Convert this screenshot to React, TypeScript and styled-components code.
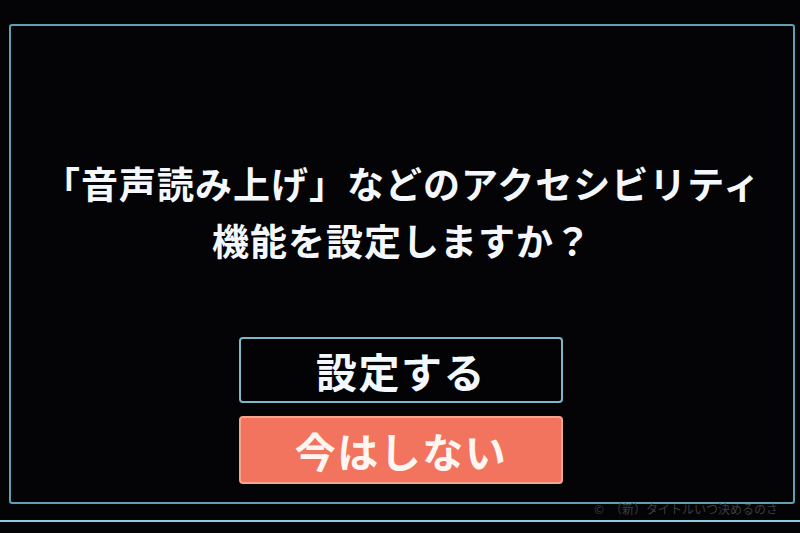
import React from "react";
import styled, { createGlobalStyle } from "styled-components";

const Global = createGlobalStyle`
  html, body { margin: 0; padding: 0; background: #040406; }
  body { width: 800px; height: 533px; overflow: hidden; font-family: "Noto Sans CJK JP", "Noto Sans", sans-serif; }
`;

const Screen = styled.div`
  width: 800px;
  height: 533px;
  display: flex;
  flex-direction: column;
  background: #040406;
`;

const Frame = styled.div`
  margin: 24px 0 0 9px;
  width: 786px;
  height: 480px;
  box-sizing: border-box;
  border: 2px solid #5f9fb2;
  border-radius: 3px;
  display: flex;
  flex-direction: column;
  align-items: center;
  padding-top: 129px;
`;

const Message = styled.div`
  color: #f4f8fc;
  font-size: 37px;
  font-weight: 700;
  line-height: 57px;
  text-align: center;
  letter-spacing: 1px;
  margin-left: 0px;
`;

const Buttons = styled.div`
  margin-top: 68px;
  display: flex;
  flex-direction: column;
  gap: 13px;
  margin-left: -2px;
`;

const Button = styled.div<{ $active?: boolean }>`
  width: 324px;
  height: ${(p) => (p.$active ? 68 : 66)}px;
  box-sizing: border-box;
  border-radius: 4px;
  border: 2px solid ${(p) => (p.$active ? "#f6a58a" : "#7db8c8")};
  background: ${(p) => (p.$active ? "#f2735e" : "#030305")};
  color: ${(p) => (p.$active ? "#fff6f2" : "#f2f8fc")};
  font-size: 41px;
  font-weight: 700;
  display: flex;
  align-items: center;
  justify-content: center;
  letter-spacing: 1.5px;
`;

const Footer = styled.div`
  height: 16px;
  display: flex;
  justify-content: flex-end;
  align-items: flex-start;
  padding-right: 22px;
`;

const Watermark = styled.div`
  margin-top: -3px;
  font-size: 12px;
  line-height: 16px;
  color: #3a3d40;
`;

const BottomLine = styled.div`
  height: 2px;
  background: #8ccbe0;
`;

export default function App() {
  return (
    <>
      <Global />
      <Screen>
        <Frame>
          <Message>
            「音声読み上げ」などのアクセシビリティ
            <br />
            機能を設定しますか？
          </Message>
          <Buttons>
            <Button>設定する</Button>
            <Button $active>今はしない</Button>
          </Buttons>
        </Frame>
        <Footer>
          <Watermark>©　（新）タイトルいつ決めるのさ</Watermark>
        </Footer>
        <BottomLine />
      </Screen>
    </>
  );
}
